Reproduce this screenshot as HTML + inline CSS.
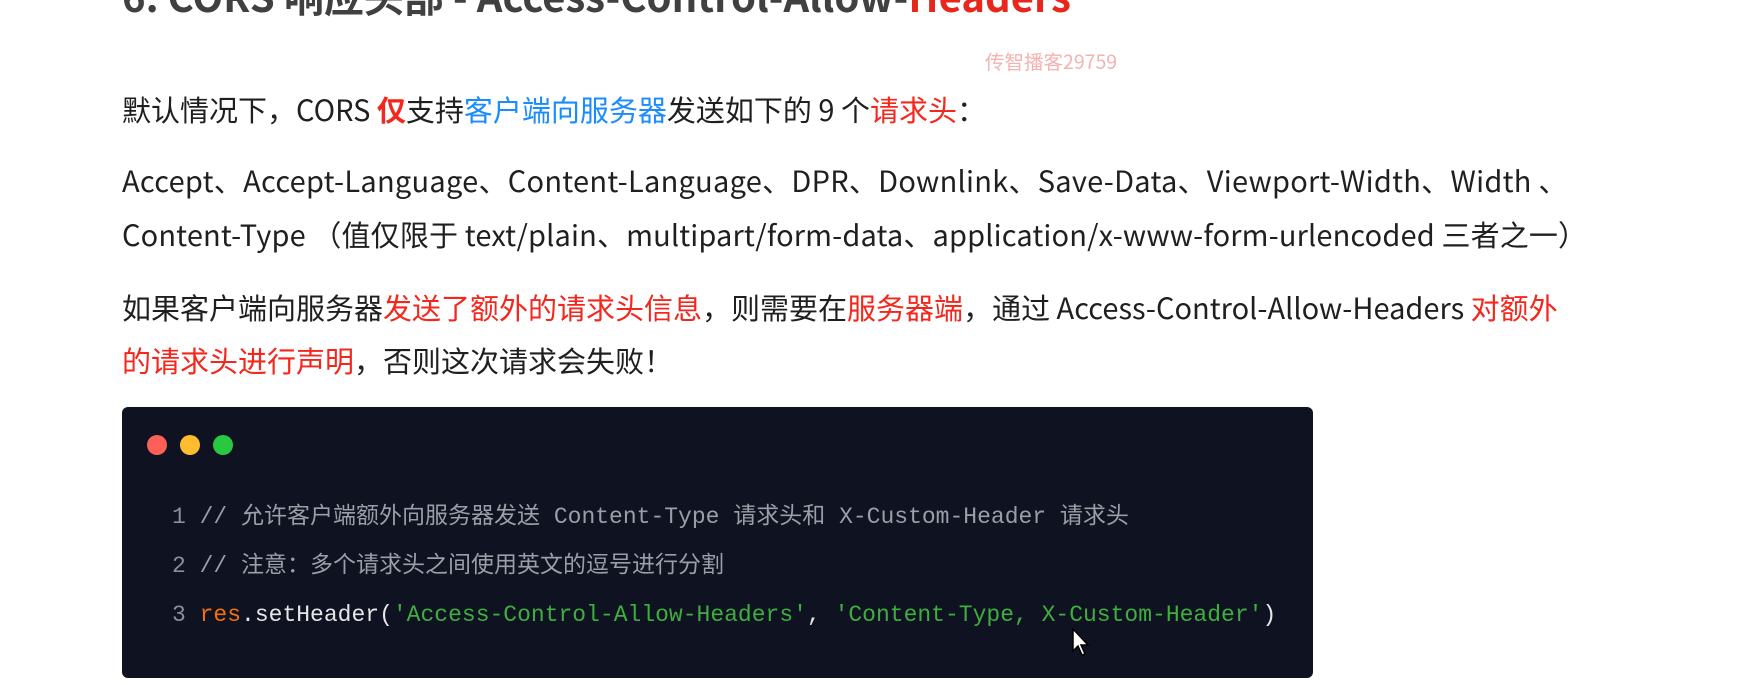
<!DOCTYPE html>
<html><head><meta charset="utf-8"><style>
body{margin:0;width:1759px;height:685px;background:#fff;overflow:hidden;position:relative;font-family:"Liberation Sans","Noto Sans CJK SC",sans-serif;color:#1f1f1f}
.l{position:absolute;left:122px;white-space:nowrap;font-family:"Noto Sans CJK SC","Liberation Sans",sans-serif;font-size:29px;line-height:40px;height:40px}
.r{color:#f5261b}.b{color:#1a8cff}
.h{position:absolute;left:122px;top:-27px;font-family:"Noto Sans CJK SC",sans-serif;font-weight:bold;font-size:40px;line-height:44px;color:#404040;white-space:nowrap}
.wm{position:absolute;left:985px;top:46px;width:138px;overflow:hidden;white-space:nowrap;font-family:"Noto Sans CJK SC",sans-serif;font-size:19.5px;color:#f3b3b3}
.code{position:absolute;left:122px;top:407px;width:1191px;height:271px;background:#0e1221;border-radius:6px}
.dot{position:absolute;top:435px;width:20px;height:20px;border-radius:50%}
.c{position:absolute;left:172px;white-space:nowrap;font-family:"Liberation Mono","Noto Sans CJK SC",monospace;font-size:23px;line-height:30px;color:#e6e6e6}
.n{color:#8a8f99}.cm{color:#9a9ea6}.o{color:#f0700e}.g{color:#3fae3f}
</style></head><body>
<div class="h">6. CORS 响应头部 - Access-Control-Allow-<span style="color:#e8261c">Headers</span></div>
<div class="wm">传智播客29759</div>
<div class="l" style="top:89px">默认情况下，CORS <b class="r">仅</b>支持<span class="b">客户端向服务器</span>发送如下的 9 个<span class="r">请求头</span>：</div>
<div class="l" style="top:160px;letter-spacing:0.26px">Accept、Accept-Language、Content-Language、DPR、Downlink、Save-Data、Viewport-Width、Width 、</div>
<div class="l" style="top:214px;letter-spacing:0.14px">Content-Type （值仅限于 text/plain、multipart/form-data、application/x-www-form-urlencoded 三者之一）</div>
<div class="l" style="top:287px">如果客户端向服务器<span class="r">发送了额外的请求头信息</span>，则需要在<span class="r">服务器端</span>，通过 Access-Control-Allow-Headers <span class="r">对额外</span></div>
<div class="l" style="top:340px"><span class="r">的请求头进行声明</span>，否则这次请求会失败！</div>
<div class="code"></div>
<div class="dot" style="left:147px;background:#fe5f57"></div>
<div class="dot" style="left:180px;background:#febc2e"></div>
<div class="dot" style="left:213px;background:#28c840"></div>
<div class="c" style="top:502px"><span class="n">1</span> <span class="cm">// 允许客户端额外向服务器发送 Content-Type 请求头和 X-Custom-Header 请求头</span></div>
<div class="c" style="top:551px"><span class="n">2</span> <span class="cm">// 注意：多个请求头之间使用英文的逗号进行分割</span></div>
<div class="c" style="top:600px"><span class="n">3</span> <span class="o">res</span>.setHeader(<span class="g">'Access-Control-Allow-Headers'</span>, <span class="g">'Content-Type, X-Custom-Header'</span>)</div>
<svg style="position:absolute;left:1071px;top:628px" width="20" height="30" viewBox="0 0 20 30"><path d="M2 1 L2 23 L7 18 L11 27 L14 26 L10 17 L17 17 Z" fill="#fff" stroke="#000" stroke-width="1.5"/></svg>
</body></html>
